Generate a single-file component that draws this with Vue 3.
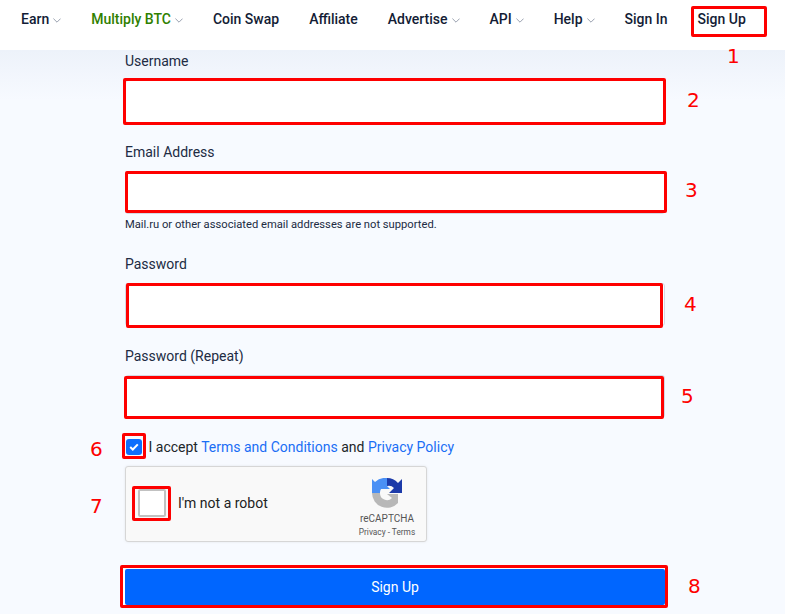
<template>
  <div class="page">
    <header class="topbar">
      <nav class="nav">
        <a v-for="item in navItems" :key="item.label" :class="['nav-link', { green: item.green }]">
          {{ item.label }}
          <svg v-if="item.menu" class="caret" width="8" height="5" viewBox="0 0 8 5">
            <path d="M.4.6 4 4.2 7.6.6" fill="none" stroke="#99a1af" stroke-width="1" />
          </svg>
        </a>
      </nav>
    </header>

    <form class="form" @submit.prevent>
      <div class="field first">
        <label>Username</label>
        <input type="text" />
      </div>
      <div class="field email">
        <label>Email Address</label>
        <input type="email" />
        <small>Mail.ru or other associated email addresses are not supported.</small>
      </div>
      <div class="field password">
        <label>Password</label>
        <input type="password" />
      </div>
      <div class="field repeat">
        <label>Password (Repeat)</label>
        <input type="password" />
      </div>

      <div class="accept">
        <span class="check">
          <svg width="10" height="8" viewBox="0 0 10 8">
            <path d="M1.2 4 3.8 6.5 8.8 1.4" fill="none" stroke="#fff" stroke-width="2" />
          </svg>
        </span>
        <span>I accept <a>Terms and Conditions</a> and <a>Privacy Policy</a></span>
      </div>

      <div class="captcha">
        <span class="captcha-box"></span>
        <span class="captcha-text">I'm not a robot</span>
        <div class="captcha-brand">
          <svg width="30" height="30" viewBox="0 0 30 30">
            <path d="M0 15H8A7 7 0 0 0 20 20L15 16H26V25A15 15 0 0 1 0 15Z" fill="#b8b8b8" />
            <path d="M0 15V1L3 4A15 15 0 0 1 15 0V8L18 11H9A7 7 0 0 0 8 15Z" fill="#4a90f5" />
            <path d="M15 0A15 15 0 0 1 26 5L30 1V15H17L22 10A7 7 0 0 0 15 8Z" fill="#1c3aa9" />
          </svg>
          <span class="brand-name">reCAPTCHA</span>
          <span class="brand-links">Privacy - Terms</span>
        </div>
      </div>

      <button class="submit" type="submit">Sign Up</button>
    </form>

    <div v-for="box in marks" :key="box.n" class="mark" :style="boxStyle(box)"></div>
    <span v-for="box in marks" :key="'n' + box.n" class="mark-num" :style="{ left: box.nx + 'px', top: box.ny + 'px' }">{{ box.n }}</span>
  </div>
</template>

<script setup>
const navItems = [
  { label: "Earn", menu: true },
  { label: "Multiply BTC", menu: true, green: true },
  { label: "Coin Swap" },
  { label: "Affiliate" },
  { label: "Advertise", menu: true },
  { label: "API", menu: true },
  { label: "Help", menu: true },
  { label: "Sign In" },
  { label: "Sign Up" },
];

// red annotation rectangles and their numbers
const marks = [
  { n: 1, x: 691, y: 6, w: 76, h: 31, nx: 727, ny: 44 },
  { n: 2, x: 123, y: 78, w: 543, h: 47, nx: 687, ny: 88 },
  { n: 3, x: 125, y: 171, w: 542, h: 42, nx: 685, ny: 178 },
  { n: 4, x: 126, y: 283, w: 537, h: 45, nx: 684, ny: 292 },
  { n: 5, x: 124, y: 376, w: 540, h: 43, nx: 681, ny: 384 },
  { n: 6, x: 122, y: 433, w: 24, h: 26, nx: 90, ny: 437 },
  { n: 7, x: 132, y: 486, w: 39, h: 35, nx: 90, ny: 494 },
  { n: 8, x: 120, y: 565, w: 548, h: 43, nx: 688, ny: 574 },
];

const boxStyle = (b) => ({
  left: b.x + "px",
  top: b.y + "px",
  width: b.w + "px",
  height: b.h + "px",
});
</script>

<style>
html,
body {
  margin: 0;
  background: #f7faff;
}
</style>

<style scoped>
.page {
  position: relative;
  height: 614px;
  overflow: hidden;
  font-family: Roboto, "Liberation Sans", sans-serif;
  background: linear-gradient(to bottom, #edf2fa 50px, #f7faff 100px);
}
.topbar {
  height: 50px;
  background: #fff;
}
.nav {
  display: flex;
  gap: 30px;
  padding: 11px 0 0 21px;
}
.nav-link {
  font-size: 14px;
  font-weight: 500;
  line-height: 16px;
  color: #131c35;
  white-space: nowrap;
}
.nav-link.green {
  color: #2f8000;
}
.caret {
  margin-left: 0.5px;
  vertical-align: 1px;
}
.form {
  width: 540px;
  margin-left: 125px;
  display: flex;
  flex-direction: column;
}
.field {
  display: flex;
  flex-direction: column;
}
.field label {
  font-size: 14px;
  line-height: 16px;
  color: #212b43;
  margin-bottom: 11px;
}
.field input {
  height: 43px;
  box-sizing: border-box;
  border: 1px solid #d3d9e4;
  border-radius: 3px;
  background: #fff;
  outline: none;
}
.field small {
  font-size: 11.2px;
  line-height: 13px;
  margin-top: 4px;
  color: #212b43;
}
.first {
  padding-top: 3px;
}
.email {
  margin-top: 21px;
}
.password {
  margin-top: 25px;
}
.repeat {
  margin-top: 22px;
}
.accept {
  display: flex;
  align-items: center;
  gap: 6.5px;
  margin-top: 21px;
  font-size: 14px;
  line-height: 16px;
  color: #212529;
}
.accept a {
  color: #1a6ef5;
}
.check {
  width: 16px;
  height: 16px;
  margin-left: 1px;
  border-radius: 3px;
  background: #0d6efd;
  display: flex;
  align-items: center;
  justify-content: center;
}
.captcha {
  width: 302px;
  height: 76px;
  box-sizing: border-box;
  margin-top: 11px;
  padding-bottom: 2px;
  border: 1px solid #d6d6d6;
  border-radius: 3px;
  background: #f9f9f9;
  box-shadow: 0 0 3px rgba(0, 0, 0, 0.08);
  display: flex;
  align-items: center;
  position: relative;
}
.captcha-box {
  width: 28px;
  height: 28px;
  margin-left: 12px;
  box-sizing: border-box;
  border: 2px solid #c1c1c1;
  border-radius: 2px;
  background: #fff;
}
.captcha-text {
  margin-left: 12px;
  font-size: 14px;
  color: #222;
}
.captcha-brand {
  position: absolute;
  right: 9px;
  top: 11px;
  width: 60px;
  display: flex;
  flex-direction: column;
  align-items: center;
}
.brand-name {
  font-size: 10px;
  line-height: 12px;
  margin-top: 5px;
  color: #555;
}
.brand-links {
  font-size: 8.3px;
  line-height: 10px;
  margin-top: 2px;
  color: #555;
  white-space: nowrap;
}
.submit {
  height: 36px;
  margin-top: 27px;
  padding-bottom: 2px;
  border: 0;
  border-radius: 2px;
  background: #0066ff;
  color: #fff;
  font-family: inherit;
  font-size: 14px;
  box-shadow: -2px 0 0 #fff;
}
.mark {
  position: absolute;
  box-sizing: border-box;
  border: 3px solid #fe0000;
  border-radius: 2px;
  pointer-events: none;
}
.mark-num {
  position: absolute;
  font-family: "DejaVu Sans", sans-serif;
  font-size: 20px;
  line-height: 24px;
  color: #fe0000;
}
</style>
